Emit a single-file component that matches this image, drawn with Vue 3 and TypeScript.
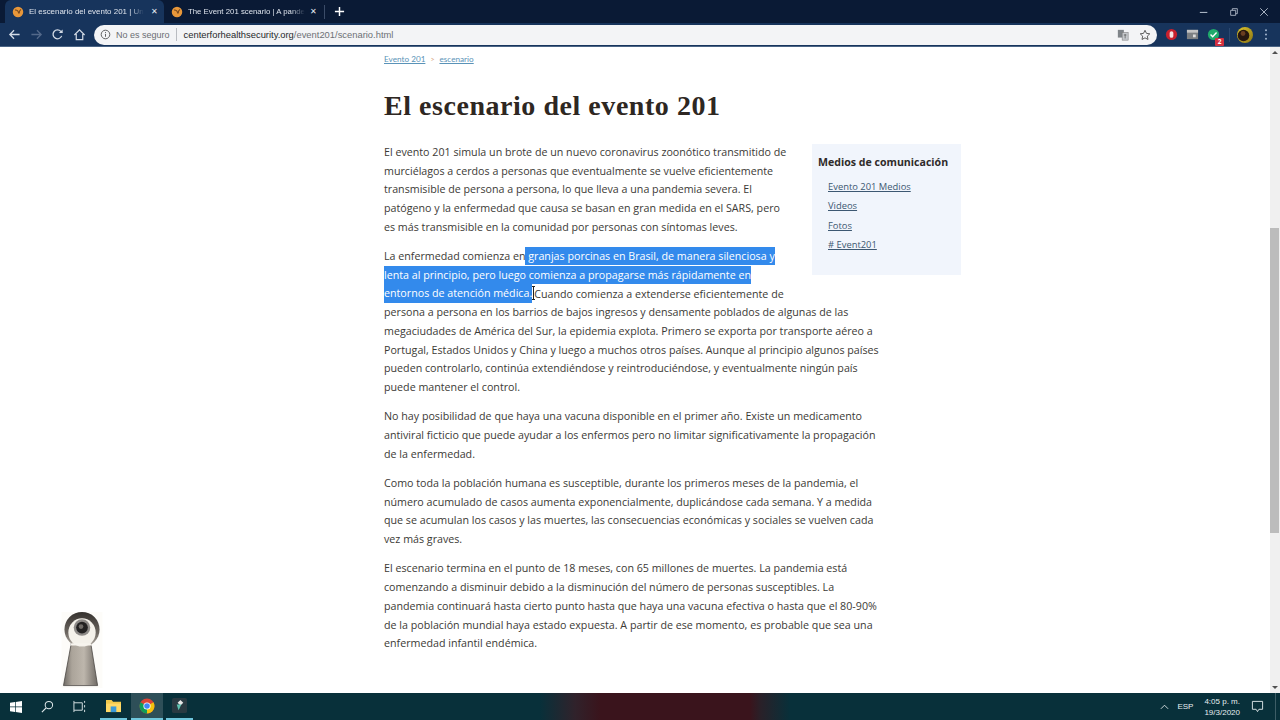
<script setup lang="ts">
const links = ['Evento 201 Medios', 'Videos', 'Fotos', '# Event201']
</script>

<template>
  <div class="screen">
    <header class="tabstrip">
      <div class="tab active">
        <svg class="fav" viewBox="0 0 16 16"><circle cx="8" cy="8" r="7" fill="#e8973a"/><path d="M4 5.500c2.500-.5 4.500 1 5 4.500M12 4.500c-1.500 1-2.500 3-2.500 5.500" stroke="#7a4a1e" stroke-width="1.500" fill="none"/></svg>
        <span class="tab-title">El escenario del evento 201 | Un</span>
        <span class="tab-x">✕</span>
      </div>
      <div class="tab">
        <svg class="fav" viewBox="0 0 16 16"><circle cx="8" cy="8" r="7" fill="#e8973a"/><path d="M4 5.500c2.500-.5 4.500 1 5 4.500M12 4.500c-1.500 1-2.500 3-2.500 5.500" stroke="#7a4a1e" stroke-width="1.500" fill="none"/></svg>
        <span class="tab-title">The Event 201 scenario | A pande</span>
        <span class="tab-x">✕</span>
      </div>
      <span class="tab-sep"></span>
      <svg class="plus" viewBox="0 0 12 12"><path d="M6 1v10M1 6h10" stroke="#fff" stroke-width="1.600"/></svg>
      <div class="win-btns">
        <svg viewBox="0 0 12 12"><path d="M1 6.500h9" stroke="#b8c2d0" stroke-width="1.200"/></svg>
        <svg viewBox="0 0 12 12"><path d="M2 4h6v6H2zM4 4V2h6v6H8" stroke="#b8c2d0" fill="none"/></svg>
        <svg viewBox="0 0 12 12"><path d="M1.500 1.500l9 9M10.500 1.500l-9 9" stroke="#c8d0dc" stroke-width="1"/></svg>
      </div>
    </header>

    <nav class="toolbar">
      <svg class="nav" viewBox="0 0 14 14"><path d="M12.500 7H2M6.500 2.500 2 7l4.500 4.500" stroke="#d3dbe6" stroke-width="1.400" fill="none"/></svg>
      <svg class="nav" viewBox="0 0 14 14"><path d="M1.500 7H12M7.500 2.500 12 7l-4.500 4.500" stroke="#53698a" stroke-width="1.400" fill="none"/></svg>
      <svg class="nav" viewBox="0 0 14 14"><path d="M11.500 8.500A4.800 4.800 0 1 1 10.600 3.600L12 5" stroke="#d3dbe6" stroke-width="1.400" fill="none"/><path d="M12.500 1.500v4h-4z" fill="#d3dbe6"/></svg>
      <svg class="nav" viewBox="0 0 14 14"><path d="M1.500 7.500 7 2l5.500 5.500M3.500 6.500v6h7v-6" stroke="#d3dbe6" stroke-width="1.300" fill="none"/></svg>
      <div class="omnibox">
        <svg class="info" viewBox="0 0 12 12"><circle cx="6" cy="6" r="4.700" stroke="#555" fill="none"/><path d="M6 5.300v3.200M6 3.300v1" stroke="#555"/></svg>
        <span class="secure">No es seguro</span>
        <span class="omni-sep"></span>
        <span class="url"><span class="host">centerforhealthsecurity.org</span>/event201/scenario.html</span>
        <span class="omni-right">
          <svg viewBox="0 0 14 14"><rect x="1" y="1" width="7" height="9" fill="#7f8489"/><rect x="6" y="4" width="7" height="9" fill="#c5c8cc" stroke="#777" stroke-width=".6"/><path d="M8 7h3M9.500 6v5" stroke="#555" stroke-width=".8"/></svg>
          <svg viewBox="0 0 14 14"><path d="M7 1.500l1.700 3.600 3.900.5-2.900 2.700.8 3.900L7 10.300l-3.500 1.900.8-3.900L1.400 5.600l3.900-.5z" stroke="#555" stroke-width="1.100" fill="none"/></svg>
        </span>
      </div>
      <div class="exts">
        <svg class="ext" viewBox="0 0 14 14"><circle cx="7" cy="7" r="6" fill="#c8202e"/><rect x="5" y="3.500" width="4" height="7" rx="2" fill="#f6e2e2"/></svg>
        <svg class="ext" viewBox="0 0 14 14"><rect x="1" y="2" width="12" height="10" fill="#7d8083"/><rect x="1" y="2" width="12" height="3" fill="#c4c4c4"/><rect x="7.500" y="7" width="3" height="3" fill="#ddd"/></svg>
        <span class="ext badge-wrap">
          <svg viewBox="0 0 14 14"><circle cx="7" cy="7" r="6" fill="#1faa6b"/><path d="M3.800 7l2.300 2.300 4.200-4.400" stroke="#fff" stroke-width="1.500" fill="none"/></svg>
          <span class="badge">2</span>
        </span>
        <span class="ext-sep"></span>
        <svg class="avatar" viewBox="0 0 16 16"><defs><linearGradient id="gold" x1="0" y1="0" x2="1" y2="1"><stop offset="0" stop-color="#e0c62c"/><stop offset="1" stop-color="#8a7414"/></linearGradient></defs><circle cx="8" cy="8" r="8" fill="url(#gold)"/><circle cx="6.500" cy="8.500" r="5.800" fill="#26160f"/><circle cx="6" cy="6.500" r="2.400" fill="#6a3d20"/></svg>
        <svg class="kebab" viewBox="0 0 4 14"><circle cx="2" cy="2.500" r="1.100" fill="#9fb2cc"/><circle cx="2" cy="7" r="1.100" fill="#9fb2cc"/><circle cx="2" cy="11.500" r="1.100" fill="#9fb2cc"/></svg>
      </div>
    </nav>

    <div class="viewport">
      <main class="page">
        <div class="crumbs"><a>Evento 201</a><span class="gt">&gt;</span><a>escenario</a></div>
        <h1>El escenario del evento 201</h1>
        <div class="article">
          <aside class="side">
            <h2>Medios de comunicación</h2>
            <ul>
              <li v-for="l in links" :key="l"><a>{{ l }}</a></li>
            </ul>
          </aside>
          <p>El evento 201 simula un brote de un nuevo coronavirus zoonótico transmitido de<br>murciélagos a cerdos a personas que eventualmente se vuelve eficientemente<br>transmisible de persona a persona, lo que lleva a una pandemia severa. El<br>patógeno y la enfermedad que causa se basan en gran medida en el SARS, pero<br>es más transmisible en la comunidad por personas con síntomas leves.</p>
          <p>La enfermedad comienza en<span class="sel"> granjas porcinas en Brasil, de manera silenciosa y<br>lenta al principio, pero luego comienza a propagarse más rápidamente en<br>entornos de atención médica.</span><span class="caret"></span>Cuando comienza a extenderse eficientemente de<br>persona a persona en los barrios de bajos ingresos y densamente poblados de algunas de las<br>megaciudades de América del Sur, la epidemia explota. Primero se exporta por transporte aéreo a<br>Portugal, Estados Unidos y China y luego a muchos otros países. Aunque al principio algunos países<br>pueden controlarlo, continúa extendiéndose y reintroduciéndose, y eventualmente ningún país<br>puede mantener el control.</p>
          <p>No hay posibilidad de que haya una vacuna disponible en el primer año. Existe un medicamento<br>antiviral ficticio que puede ayudar a los enfermos pero no limitar significativamente la propagación<br>de la enfermedad.</p>
          <p>Como toda la población humana es susceptible, durante los primeros meses de la pandemia, el<br>número acumulado de casos aumenta exponencialmente, duplicándose cada semana. Y a medida<br>que se acumulan los casos y las muertes, las consecuencias económicas y sociales se vuelven cada<br>vez más graves.</p>
          <p>El escenario termina en el punto de 18 meses, con 65 millones de muertes. La pandemia está<br>comenzando a disminuir debido a la disminución del número de personas susceptibles. La<br>pandemia continuará hasta cierto punto hasta que haya una vacuna efectiva o hasta que el 80-90%<br>de la población mundial haya estado expuesta. A partir de ese momento, es probable que sea una<br>enfermedad infantil endémica.</p>
        </div>
        <svg class="keyhole" viewBox="0 0 44 80">
          <defs>
            <linearGradient id="shaft" x1="0" y1="0" x2="1" y2="0"><stop offset="0" stop-color="#6f6a64"/><stop offset=".25" stop-color="#aba49a"/><stop offset=".6" stop-color="#bdb6ac"/><stop offset="1" stop-color="#6f6a64"/></linearGradient>
            <linearGradient id="ring" x1="0" y1="0" x2="0" y2="1"><stop offset="0" stop-color="#35312e"/><stop offset=".6" stop-color="#6d6761"/><stop offset="1" stop-color="#b5afa6"/></linearGradient>
          </defs>
          <rect x="1" y="1" width="42" height="78" fill="#fdfcf9"/>
          <path d="M11 33 3 76.500h35L31 33z" fill="url(#shaft)" stroke="#4a4642" stroke-width=".8"/>
          <circle cx="22" cy="19" r="18" fill="url(#ring)"/>
          <ellipse cx="22" cy="22" rx="14" ry="14.500" fill="#f4f1ea"/>
          <path d="M11 33h20l1.500 2.500h-23z" fill="#f7f4ee"/>
          <circle cx="22" cy="17" r="8.500" fill="#8d8a87"/>
          <circle cx="22" cy="17" r="6" fill="#232222"/>
          <circle cx="21" cy="16" r="2.400" fill="#6f6b67"/>
        </svg>
      </main>
      <div class="scrollbar">
        <span class="arrow up"></span>
        <span class="thumb"></span>
        <span class="arrow down"></span>
      </div>
    </div>

    <footer class="taskbar">
      <svg class="win" viewBox="0 0 12 12"><path d="M0 1.700 5 1v4.600H0zM5.700.9 12 0v5.600H5.700zM0 6.300h5V11L0 10.300zM5.700 6.300H12V12l-6.300-.9z" fill="#fff"/></svg>
      <svg class="tb-ico search" viewBox="0 0 14 14"><circle cx="8.500" cy="5.500" r="4" stroke="#dfe8ea" stroke-width="1.100" fill="none"/><path d="M5.500 8.500 1 13" stroke="#dfe8ea" stroke-width="1.300"/></svg>
      <svg class="tb-ico tasks" viewBox="0 0 14 14"><path d="M1 1v2M1 3h9M1 11h9M1 3v8M10 3v8M12.500 1v2M12.500 5.500v2.500M12.500 10.500v2.500M1 11v2" stroke="#dfe8ea" fill="none"/></svg>
      <div class="slot folder on-line">
        <svg class="app" viewBox="0 0 16 14"><path d="M0 1h6l1.500 2H16v11H0z" fill="#f2c94c"/><rect x="0" y="5" width="16" height="9" fill="#ffd966"/><rect x="5" y="8" width="6" height="6" fill="#3b9ad9"/></svg>
      </div>
      <div class="slot active on-line">
        <svg class="app chrome" viewBox="0 0 16 16"><circle cx="8" cy="8" r="7.500" fill="#db4437"/><path d="M8 8 14.500 4.300A7.500 7.500 0 0 1 8 15.500z" fill="#f4c20d"/><path d="M8 8 8 15.500A7.500 7.500 0 0 1 1.500 4.300z" fill="#0f9d58"/><circle cx="8" cy="8" r="3.600" fill="#fff"/><circle cx="8" cy="8" r="2.800" fill="#4285f4"/></svg>
      </div>
      <div class="slot last on-line">
        <svg class="app" viewBox="0 0 16 16"><rect width="16" height="16" rx="2" fill="#2a3a42"/><path d="M9 2l3 3-3 3-3-3z" fill="#e8e8e8"/><path d="M5 7h5l-3 6z" fill="#5ec2b0"/></svg>
      </div>
      <div class="tray">
        <svg class="caret-up" viewBox="0 0 10 6"><path d="M1 5l4-4 4 4" stroke="#dfe8ea" fill="none"/></svg>
        <span class="lang">ESP</span>
        <span class="clock"><span>4:05 p. m.</span><span>19/3/2020</span></span>
        <svg class="notify" viewBox="0 0 14 14"><path d="M1.500 1.500h11v8.500H8.500L7 12.500 5.500 10H1.500z" stroke="#dfe8ea" fill="none"/></svg>
        <span class="desktop"></span>
      </div>
    </footer>
  </div>
</template>

<style>
body { margin: 0; background: #fff; overflow: hidden; }
</style>

<style scoped>
.screen { width: 1280px; height: 720px; display: flex; flex-direction: column; overflow: hidden; font-family: "Open Sans", "Liberation Sans", sans-serif; }
.tabstrip { height: 23px; background: #0a1a35; display: flex; align-items: center; padding-left: 5px; flex: none; }
.tab { width: 159px; height: 23px; box-sizing: border-box; padding: 0 6px 0 7px; display: flex; align-items: center; font-size: 7.950px; color: #dde3ec; font-family: "Liberation Sans", sans-serif; }
.tab + .tab { font-size: 7.800px; }
.tab.active { background: #17345c; border-radius: 6px 6px 0 0; }
.fav { width: 12px; height: 12px; flex: none; margin-right: 5px; }
.tab-title { white-space: nowrap; -webkit-mask-image: linear-gradient(90deg, #000 88%, transparent); mask-image: linear-gradient(90deg, #000 88%, transparent); }
.tab-x { font-size: 8px; color: #e6ebf2; margin-left: auto; }
.tab-sep { width: 1px; height: 14px; background: #3b4c68; margin-left: 1px; }
.plus { width: 11px; height: 11px; margin-left: 9px; }
.win-btns { margin-left: auto; display: flex; gap: 20px; padding-right: 11px; }
.win-btns svg { width: 10px; height: 10px; }
.toolbar { height: 24px; box-sizing: border-box; background: #17345c; display: flex; align-items: center; padding-left: 8px; flex: none; border-bottom: 1px solid #4a6485; }
.nav { width: 13px; height: 13px; margin-right: 8.500px; flex: none; }
.omnibox { width: 1063px; height: 20px; background: #f3f4f6; border-radius: 10px; display: flex; align-items: center; padding: 0 0 0 6px; box-sizing: border-box; font-size: 9px; font-family: "Liberation Sans", sans-serif; flex: none; }
.info { width: 11px; height: 11px; margin-right: 5px; }
.secure { color: #6a6d72; }
.omni-sep { width: 1px; height: 13px; background: #b9bcc1; margin: 0 7px 0 6px; }
.url { color: #6d7075; font-size: 9.400px; }
.host { color: #26282b; }
.omni-right { margin-left: auto; display: flex; gap: 10px; padding-right: 6px; }
.omni-right svg { width: 12px; height: 12px; }
.exts { display: flex; align-items: center; margin-left: 8px; }
.ext { width: 13px; height: 13px; display: block; margin-right: 8px; position: relative; }
.badge-wrap svg { width: 13px; height: 13px; display: block; }
.badge { position: absolute; right: -4px; bottom: -5px; background: #d32f3f; color: #fff; font-size: 6.500px; width: 9px; height: 8px; line-height: 8px; text-align: center; font-weight: 700; border-radius: 1px; }
.ext-sep { width: 1px; height: 14px; background: #2b4870; margin: 0 7px 0 1px; }
.avatar { width: 16px; height: 16px; margin-right: 11px; }
.kebab { width: 4px; height: 13px; }
.viewport { flex: 1; min-height: 0; display: flex; background: #fff; position: relative; }
.page { flex: 1; padding-left: 384px; box-sizing: border-box; overflow: hidden; min-width: 0; }
.crumbs { margin-top: 7px; height: 10px; font-size: 8.200px; line-height: 10px; color: #5a93b8; display: flex; align-items: center; font-family: "Lato", sans-serif; }
.crumbs a { text-decoration: underline; }
.gt { color: #d8a27a; margin: 0 5px; font-size: 7px; }
h1 { margin: 25px 0 0; font-family: "Liberation Serif", serif; font-weight: 700; font-size: 28px; line-height: 34px; color: #2e2722; letter-spacing: .54px; }
.article { width: 577px; margin-top: 20px; }
.side { float: right; width: 149px; height: 131px; box-sizing: border-box; background: #f1f5fc; padding: 10px 0 0 6px; margin-top: 1px; }
.side h2 { margin: 0; font-size: 10.600px; line-height: 16px; font-weight: 700; color: #2f2b2a; white-space: nowrap; }
.side ul { list-style: none; margin: 10px 0 0; padding: 0 0 0 10px; }
.side li { font-size: 9.400px; line-height: 14px; margin-bottom: 5.300px; color: #3d5872; }
.side a { text-decoration: underline; }
p { margin: 0 0 10.500px; font-size: 10.700px; line-height: 18.720px; color: #3c3a36; white-space: nowrap; }
.sel { background: #338aec; color: #fff; padding: 2.100px 0; }
.caret { display: inline-block; width: 3px; height: 12px; vertical-align: -2px; border: solid #222; border-width: 1px 0; margin-right: -1px; background: linear-gradient(#222, #222) center / 1px 100% no-repeat; }
.keyhole { position: absolute; left: 60px; top: 564px; width: 44px; height: 78px; }
.scrollbar { width: 10px; background: #f0f0f0; position: relative; flex: none; }
.thumb { position: absolute; left: 0; width: 9px; top: 181px; height: 305px; background: #bcbcbc; }
.arrow { position: absolute; left: 2px; width: 0; height: 0; border-left: 3px solid transparent; border-right: 3px solid transparent; }
.arrow.up { top: 4px; border-bottom: 3px solid #505050; }
.arrow.down { bottom: 4px; border-top: 3px solid #505050; }
.taskbar { height: 27px; background: linear-gradient(90deg, #08303a 540px, #30222b 575px, #3a141c 600px, #3a141c 750px, #2a2028 760px, #08303a 790px); display: flex; align-items: center; flex: none; color: #e6eef0; }
.win { width: 12px; height: 12px; margin-left: 10px; flex: none; }
.tb-ico { width: 13px; height: 13px; flex: none; }
.search { margin-left: 19px; }
.tasks { margin-left: 19px; }
.slot { width: 27px; height: 27px; display: flex; align-items: center; justify-content: center; box-sizing: border-box; flex: none; border-bottom: 2px solid transparent; }
.slot.folder { margin-left: 14px; }
.slot.active { width: 32px; margin-left: 4px; background: #2e4f58; }
.slot.last { margin-left: 3px; }
.on-line { border-bottom-color: #6fc6dc; }
.app { width: 15px; height: 15px; }
.app.chrome { width: 16px; height: 16px; }
.tray { margin-left: auto; display: flex; align-items: center; font-size: 8px; font-family: "Liberation Sans", sans-serif; }
.caret-up { width: 9px; height: 6px; margin-right: 8px; }
.lang { margin-right: 11px; }
.clock { display: flex; flex-direction: column; align-items: center; line-height: 11px; margin-right: 11px; }
.notify { width: 13px; height: 13px; }
.desktop { width: 1px; height: 27px; background: #3d5d66; margin: 0 4px 0 11px; }
</style>
